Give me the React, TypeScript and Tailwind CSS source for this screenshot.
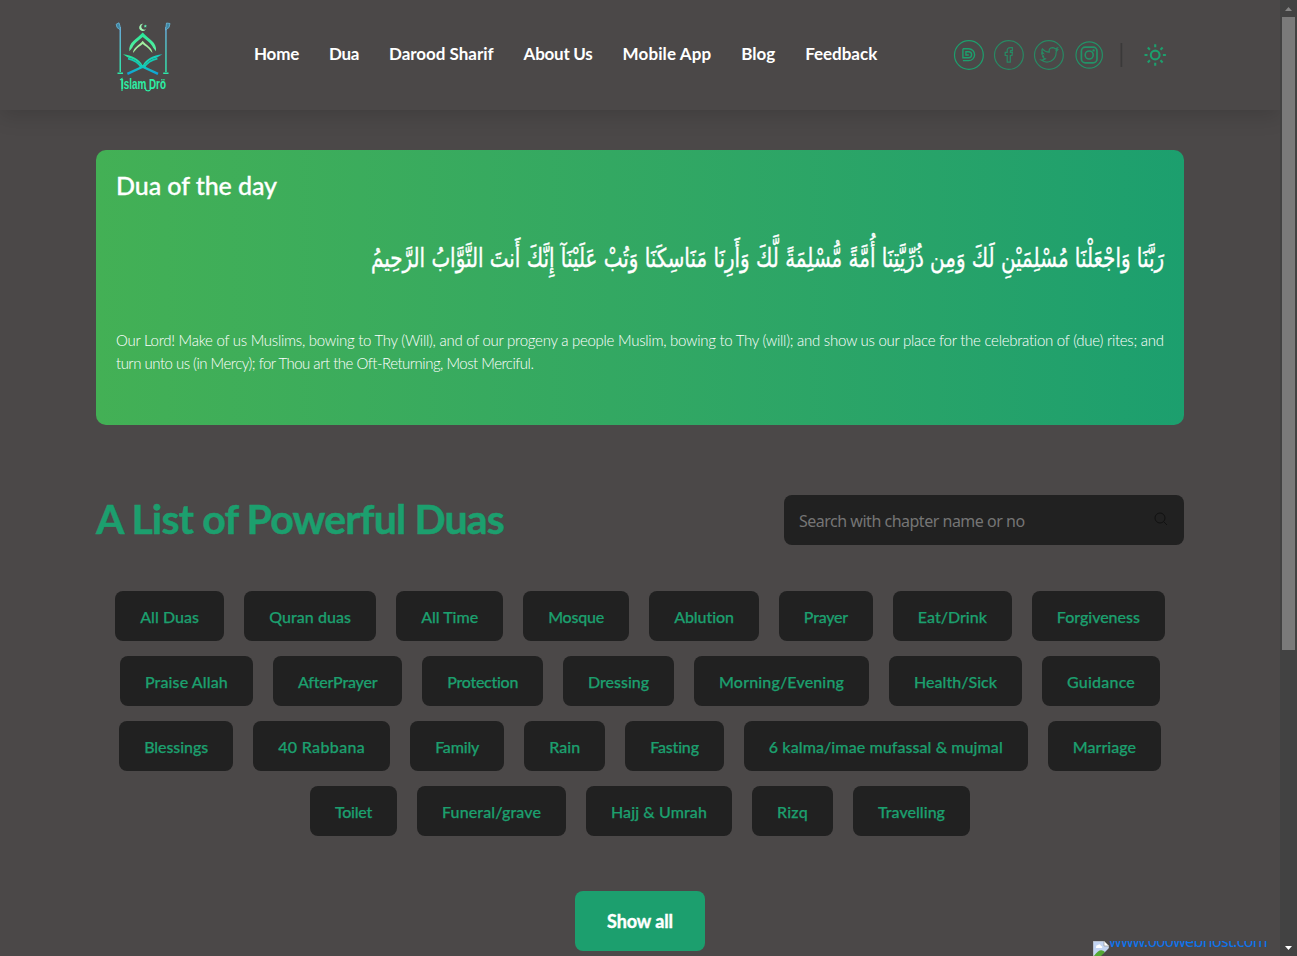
import { useLayoutEffect, useRef, useState } from "react";

function Fit({ text, width, className = "" }: { text: string; width: number; className?: string }) {
  const ref = useRef<HTMLSpanElement>(null);
  const [spacing, setSpacing] = useState(0);
  useLayoutEffect(() => {
    if (ref.current) {
      const natural = ref.current.getBoundingClientRect().width;
      setSpacing((width - natural) / text.length);
    }
  }, [text, width]);
  return (
    <span ref={ref} className={`inline-block whitespace-nowrap ${className}`} style={{ letterSpacing: `${spacing}px` }}>
      {text}
    </span>
  );
}

function Verse({ text, width }: { text: string; width: number }) {
  const ref = useRef<HTMLSpanElement>(null);
  const [scale, setScale] = useState(1);
  useLayoutEffect(() => {
    if (ref.current) setScale(width / ref.current.offsetWidth);
  }, [text, width]);
  return (
    <span
      ref={ref}
      className="inline-block origin-right whitespace-nowrap font-['DejaVu_Sans',sans-serif] text-[26px] leading-[50px] [-webkit-text-stroke:0.4px_white]"
      style={{ transform: `scaleX(${scale})` }}
    >
      {text}
    </span>
  );
}

const nav: [string, number][] = [
  ["Home", 45],
  ["Dua", 30],
  ["Darood Sharif", 104.6],
  ["About Us", 69],
  ["Mobile App", 88.6],
  ["Blog", 34],
  ["Feedback", 72],
];

const rows: [string, number][][] = [
  [["All Duas", 59], ["Quran duas", 82], ["All Time", 57], ["Mosque", 56], ["Ablution", 60], ["Prayer", 44], ["Eat/Drink", 69], ["Forgiveness", 83]],
  [["Praise Allah", 83], ["AfterPrayer", 79], ["Protection", 71], ["Dressing", 61], ["Morning/Evening", 125], ["Health/Sick", 83], ["Guidance", 68]],
  [["Blessings", 64], ["40 Rabbana", 87], ["Family", 44], ["Rain", 31], ["Fasting", 49], ["6 kalma/imae mufassal & mujmal", 234], ["Marriage", 63]],
  [["Toilet", 37], ["Funeral/grave", 99], ["Hajj & Umrah", 96], ["Rizq", 31], ["Travelling", 67]],
];

function Logo() {
  return (
    <svg width="60" height="78" viewBox="0 0 60 78" fill="none" className="overflow-visible">
      <defs>
        <linearGradient id="pole" gradientUnits="userSpaceOnUse" x1="0" y1="6" x2="0" y2="52">
          <stop offset="0" stopColor="#6aa5d8" />
          <stop offset="1" stopColor="#2ee6a8" />
        </linearGradient>
        <linearGradient id="arch" x1="0" y1="0" x2="0" y2="1">
          <stop offset="0" stopColor="#25e89a" />
          <stop offset="1" stopColor="#5ff0a0" />
        </linearGradient>
        <linearGradient id="book" x1="0" y1="0" x2="1" y2="0">
          <stop offset="0" stopColor="#2be596" />
          <stop offset="1" stopColor="#12c9c6" />
        </linearGradient>
        <linearGradient id="stand" x1="0" y1="0" x2="0" y2="1">
          <stop offset="0" stopColor="#12d0bc" />
          <stop offset="1" stopColor="#109fd8" />
        </linearGradient>
      </defs>
      <path d="M30.3 2.8A3.6 3.6 0 1 0 33 8.1A3 3 0 1 1 30.3 2.8Z" fill="#a0f5b4" />
      <path d="m32.3 3.4.5 1.1 1.1.1-.8.8.2 1.1-1-.6-1 .6.2-1.1-.8-.8 1.1-.1Z" fill="#5ff0b0" />
      <path d="M16.4 30.3C15 21.5 24 18 29.7 11.6C35.4 18 44.4 21.5 43 30.3L40 26.5C38.5 22.5 33.7 19.5 29.7 16C25.7 19.5 20.9 22.5 19.4 26.5Z" fill="url(#arch)" />
      <path d="M20 32C20 27 26 24.4 29.7 19.8C33.4 24.4 39.4 27 39.4 32L36.8 28.9C35 26.5 32 25.3 29.7 23.1C27.4 25.3 24.4 26.5 22.6 28.9Z" fill="#a2efa0" />
      <path d="M10 33.2C19 34.5 26 37.4 29.7 44.5C33.4 37.4 40 34.5 49.4 33.2L44 36.5C37 38 33 42 29.7 46C26.4 42 22 38 15 36.5Z" fill="url(#book)" />
      <path d="M15 37.6C22 39 26 42.5 28.8 46.8M44.4 37.6C37.4 39 33.4 42.5 30.6 46.8" stroke="#13cbb2" strokeWidth="1.8" />
      <path d="M27 44.5 45 52.8M32.4 44.5 14.4 52.8" stroke="url(#stand)" strokeWidth="2.4" />
      <path d="M6.5 6H8V51H6.5ZM52.2 6H53.7V51H52.2Z" fill="url(#pole)" />
      <path d="M7.5 9 4 6.5 3.2 3.2 6 1.8 7 5ZM52.5 9 56 6.5 57 2.5 53.5 2Z" fill="#3f87a4" stroke="#69b6d6" strokeWidth=".8" />
      <path d="M4.5 52.3H10M50.2 52.3H55.5" stroke="#2ee6a8" strokeWidth="1.6" />
      <text x="8" y="68" fill="#2cf0a5" fontFamily="Liberation Sans Narrow, Liberation Sans, sans-serif" fontSize="14.5" fontWeight="700" textLength="45" lengthAdjust="spacingAndGlyphs">Islam Drö</text>
      <path d="M7 59 9 57.5V70M32.5 66.5C32 70.5 36.5 71 38 67.5" stroke="#2cf0a5" strokeWidth="1.1" />
    </svg>
  );
}

function Socials() {
  return (
    <svg width="216" height="32" viewBox="-.4 0 216 32" fill="none" stroke="#1d9f6d" strokeWidth="1.2">
      <circle cx="15.5" cy="16" r="14.4" />
      <path d="M9.5 9.8H15.3A5.9 5.9 0 0 1 15.3 21.6H9.5M9.5 9.8V18.8H15.2A3 3 0 0 0 15.2 12.8H12.5V16H15.4" strokeWidth="1.4" />
      <g opacity=".75">
        <circle cx="55.5" cy="16" r="14.4" />
        <path d="M53.8 23.2V16.5H51.8V13.4H53.8V11.5Q53.8 8.6 57 8.6H59V11.6H57.6Q56.9 11.6 56.9 12.4V13.4H59L58.6 16.5H56.9V23.2Z" />
        <circle cx="95.5" cy="16" r="14.4" />
        <path d="M87.8 21.1Q90.4 21.3 92 19.8Q89.8 19.4 89.3 17.5H90.6Q88.2 16.4 88.3 13.9L89.8 14.3Q87.7 12.2 89 9.8Q91.6 13 95.8 13.1Q95.2 9 98.9 8.6Q100.8 8.6 101.8 9.8L104 9L102.8 11L104.3 10.8L102.8 12.7Q102.8 19.2 97.7 22Q92.7 24.5 87.8 21.1Z" />
      </g>
      <g opacity=".85">
        <circle cx="135.8" cy="16" r="13.2" />
        <rect x="128" y="8.2" width="15.6" height="15.6" rx="3.8" strokeWidth="1.7" />
        <circle cx="135.8" cy="16" r="4" strokeWidth="1.6" />
        <circle cx="140.2" cy="11.4" r=".6" />
      </g>
      <path d="M168 4V28" stroke="#3a3939" strokeWidth="1.7" />
      <g strokeWidth="2.1">
        <circle cx="201.8" cy="16" r="4.4" />
        <path d="M201.8 5.3V8.3M201.8 23.7V26.7M191.1 16H194.1M209.5 16H212.5M194.4 8.6 196.5 10.7M207.1 21.3 209.2 23.4M194.4 23.4 196.5 21.3M207.1 10.7 209.2 8.6" />
      </g>
    </svg>
  );
}

export default function App() {
  return (
    <div className="flex h-[956px] w-[1297px] overflow-hidden bg-[#4b4848] font-['Lato',sans-serif]">
      <div className="relative h-full w-[1280px] overflow-hidden">
        <header className="flex h-[110px] items-start pl-[113px] shadow-[0_6px_20px_rgba(0,0,0,0.14)]">
          <div className="w-[141px] pt-[21px]"><Logo /></div>
          <nav className="flex w-[699px] gap-[30px] pt-[42px] text-[17px] font-bold leading-6 text-white">
            {nav.map(([label, w]) => (
              <a key={label} className="block" href="#"><Fit text={label} width={w} /></a>
            ))}
          </nav>
          <div className="pt-[39px]"><Socials /></div>
        </header>
        <main className="px-24 pt-10">
          <section className="h-[275px] rounded-[10px] bg-linear-to-r from-[#43b055] to-[#1c9f6e] px-5 pt-[17px] text-white">
            <h2 className="h-[36px] text-[25px] font-medium leading-[36px] [-webkit-text-stroke:0.3px_white]"><Fit text="Dua of the day" width={161} /></h2>
            <p dir="rtl" className="mt-[30px] h-[50px]">
              <Verse width={793} text="رَبَّنَا وَاجْعَلْنَا مُسْلِمَيْنِ لَكَ وَمِن ذُرِّيَّتِنَا أُمَّةً مُّسْلِمَةً لَّكَ وَأَرِنَا مَنَاسِكَنَا وَتُبْ عَلَيْنَآ إِنَّكَ أَنتَ التَّوَّابُ الرَّحِيمُ" />
            </p>
            <p className="mt-[46px] text-[15px] font-light leading-[23px]">
              <Fit className="block w-fit" width={1048} text="Our Lord! Make of us Muslims, bowing to Thy (Will), and of our progeny a people Muslim, bowing to Thy (will); and show us our place for the celebration of (due) rites; and" />
              <br />
              <Fit className="block w-fit" width={417} text="turn unto us (in Mercy); for Thou art the Oft-Returning, Most Merciful." />
            </p>
          </section>
          <div className="mt-[70px] flex h-[50px] items-center justify-between">
            <h1 className="-mt-0.5 text-[41px] font-bold leading-[50px] text-[#1c9f6e] [-webkit-text-stroke:0.5px_#1c9f6e]"><Fit text="A List of Powerful Duas" width={408} /></h1>
            <label className="flex h-[50px] w-[400px] items-center rounded-lg bg-[#212121] pl-[15px] pr-4">
              <input className="min-w-0 flex-1 pt-px font-['Noto_Sans',sans-serif] text-base tracking-[-0.49px] outline-none placeholder:text-[#757575]" placeholder="Search with chapter name or no" />
              <svg width="14" height="14" viewBox="0 0 14 14" fill="none" stroke="#111" className="mb-0.5"><circle cx="6" cy="6" r="5" /><path d="m9.7 9.7 3.3 3.3" /></svg>
            </label>
          </div>
          <div className="mt-[46px] flex flex-col gap-[15px]">
            {rows.map((row, i) => (
              <div key={i} className="flex justify-center gap-5">
                {row.map(([label, w]) => (
                  <button key={label} className="h-[50px] rounded-lg bg-[#212121] px-[25px] pt-px text-base font-medium text-[#1c9f6e] [-webkit-text-stroke:0.25px_#1c9f6e]">
                    <Fit text={label} width={w} />
                  </button>
                ))}
              </div>
            ))}
          </div>
          <div className="mt-[55px] flex justify-center">
            <button className="h-[60px] w-[130px] rounded-lg bg-[#1c9f6e] text-lg font-bold text-white [-webkit-text-stroke:0.4px_white]"><Fit text="Show all" width={66} /></button>
          </div>
        </main>
        <div className="absolute bottom-0 right-[12px] flex h-[15px] w-[175px] overflow-hidden">
          <svg width="16" height="15" viewBox="0 0 16 15" className="shrink-0">
            <path d="M0 0H11L16 5V15H0Z" fill="#c3d5f3" stroke="#aaa" />
            <path d="M11 0V5H16Z" fill="#fff" stroke="#999" strokeWidth=".7" />
            <path d="M3 6Q3 4 5 4Q7 2 8 5Q10 5 9 7H3Z" fill="#fff" />
            <path d="M1 15Q7 6 12 11L9 15Z" fill="#54a833" />
            <path d="M16 7 8 15H16Z" fill="#4b4848" />
          </svg>
          <a href="#" className="-mt-[12px] block font-['Noto_Sans',sans-serif] text-base leading-6 text-[#0d75ee]"><Fit text="www.000webhost.com" width={158} /></a>
        </div>
      </div>
      <div className="flex w-[17px] flex-col items-center justify-between bg-[#424242]">
        <div className="flex flex-col items-center">
          <svg width="17" height="17" viewBox="0 0 17 17"><path d="M5 11 8.5 7 12 11Z" fill="#868686" /></svg>
          <div className="h-[633px] w-[13px] bg-[#7a7a7a]" />
        </div>
        <svg width="17" height="17" viewBox="0 0 17 17"><path d="M5 7 8.5 11 12 7Z" fill="#fff" /></svg>
      </div>
    </div>
  );
}
